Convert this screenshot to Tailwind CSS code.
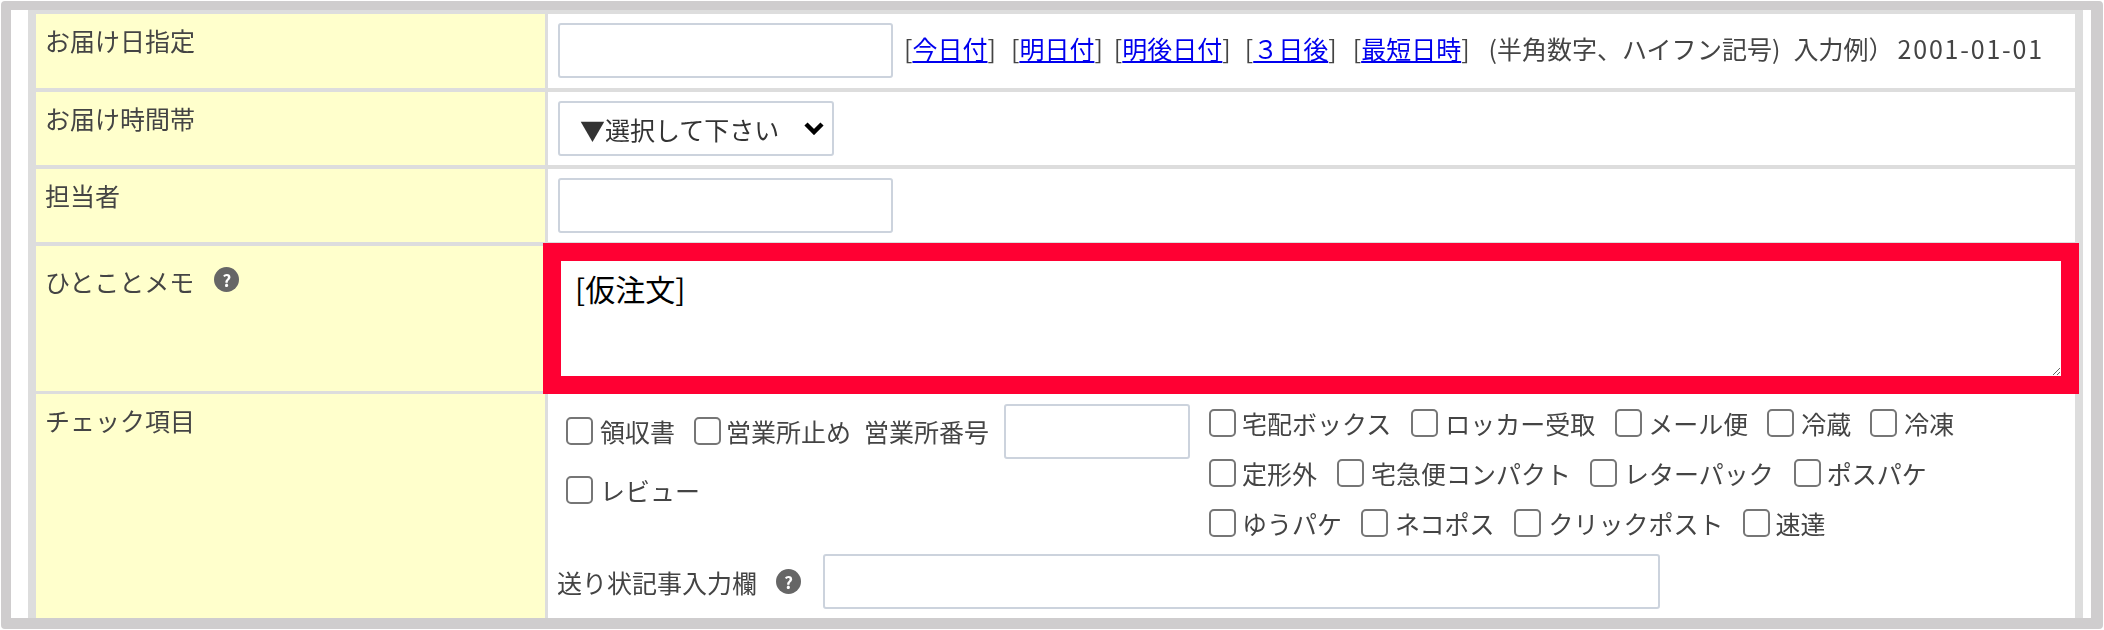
<!DOCTYPE html>
<html lang="ja">
<head>
    <meta charset="UTF-8">
    <title>受注入力</title>
    <script src="https://cdn.jsdelivr.net/npm/@tailwindcss/browser@4"></script>
</head>
<body class="w-[2104px] h-[630px] overflow-hidden bg-white font-['Noto_Sans_CJK_JP',sans-serif] text-[25px] leading-[36px] text-[#444]">

    <!-- outer frame -->
    <div class="mt-[1px] ml-[1px] w-[2102px] h-[628px] border-t-[9px] border-l-[10px] border-r-[12px] border-b-[11px] border-[#cfcdce] rounded-[4px] pl-[17px] pr-[8px] bg-white">
        <div class="h-full bg-[#dddddd] border-t-[4px] border-x-[8px] border-[#dddddd]">

            <!-- お届け日指定 -->
            <div class="flex h-[74px] mb-[4px]">
                <div class="w-[509px] shrink-0 bg-[#ffffcc] pl-[9px] pt-[8px] blur-[0.6px]">お届け日指定</div>
                <div class="flex-1 min-w-0 ml-[3px] bg-white pl-[10px] pt-[9px] flex items-start blur-[0.6px]">
                    <input type="text" class="w-[335px] h-[55px] border-2 border-[#ccd3dd] rounded-[3px] bg-white">
                    <div class="ml-[11px] mt-[7px] flex whitespace-nowrap">
                        <span>[<a href="#" class="text-[#0000ee] underline">今日付</a>]</span>
                        <span class="ml-[15px]">[<a href="#" class="text-[#0000ee] underline">明日付</a>]</span>
                        <span class="ml-[11px]">[<a href="#" class="text-[#0000ee] underline">明後日付</a>]</span>
                        <span class="ml-[14px]">[<a href="#" class="text-[#0000ee] underline">３日後</a>]</span>
                        <span class="ml-[16px]">[<a href="#" class="text-[#0000ee] underline">最短日時</a>]</span>
                        <span class="ml-[19px]">(半角数字、ハイフン記号)<span class="ml-[13px]">入力例）</span><span class="ml-[4px] tracking-[1.8px]">2001-01-01</span></span>
                    </div>
                </div>
            </div>

            <!-- お届け時間帯 -->
            <div class="flex h-[73px] mb-[4px]">
                <div class="w-[509px] shrink-0 bg-[#ffffcc] pl-[9px] pt-[8px] blur-[0.6px]">お届け時間帯</div>
                <div class="flex-1 min-w-0 ml-[3px] bg-white pl-[10px] pt-[9px] blur-[0.6px]">
                    <div class="relative w-[276px] h-[55px]">
                        <select class="appearance-none w-full h-full border-2 border-[#ccd3dd] rounded-[3px] bg-white pl-[20px] text-[#333]">
                            <option>▼選択して下さい</option>
                        </select>
                        <svg class="absolute left-[246px] top-[20px] w-[20px] h-[14px]" viewBox="0 0 20 14" fill="none" stroke="#000" stroke-width="4.5">
                            <path d="M2 3l8 8 8-8"/>
                        </svg>
                    </div>
                </div>
            </div>

            <!-- 担当者 -->
            <div class="flex h-[73px] mb-[4px]">
                <div class="w-[509px] shrink-0 bg-[#ffffcc] pl-[9px] pt-[8px] blur-[0.6px]">担当者</div>
                <div class="flex-1 min-w-0 ml-[3px] bg-white pl-[10px] pt-[9px] blur-[0.6px]">
                    <input type="text" class="w-[335px] h-[55px] border-2 border-[#ccd3dd] rounded-[3px] bg-white">
                </div>
            </div>

            <!-- ひとことメモ -->
            <div class="flex h-[145px] mb-[3px]">
                <div class="w-[509px] shrink-0 bg-[#ffffcc] pl-[9px] pt-[17px] flex items-start blur-[0.6px]">
                    <span>ひとことメモ</span>
                    <span class="ml-[20px] mt-[4px] w-[25px] h-[25px] rounded-full bg-[#666666] text-white text-[17px] leading-[25px] font-bold text-center">?</span>
                </div>
                <div class="flex-1 min-w-0 ml-[3px] bg-white">
                    <textarea class="relative z-10 block -ml-[5px] -mt-[3px] w-[1536px] h-[151px] border-[18px] border-[#ff0033] bg-white pl-[14px] pt-[9px] text-[30px] text-black outline-none">[仮注文]</textarea>
                </div>
            </div>

            <!-- チェック項目 -->
            <div class="flex h-[224px]">
                <div class="w-[509px] shrink-0 bg-[#ffffcc] pl-[9px] pt-[8px] blur-[0.6px]">チェック項目</div>
                <div class="flex-1 min-w-0 ml-[3px] bg-white pt-[10px] overflow-hidden blur-[0.6px]">
                    <div class="flex pl-[18px] h-[150px]">
                        <div class="w-[643px] shrink-0 pt-[13px]">
                            <div class="flex items-center h-[28px] whitespace-nowrap">
                                <input type="checkbox" class="w-[27px] h-[28px] m-0 appearance-none border-2 border-[#767676] rounded-[5px] bg-white">
                                <span class="ml-[7px]">領収書</span>
                                <input type="checkbox" class="ml-[19px] w-[27px] h-[28px] m-0 appearance-none border-2 border-[#767676] rounded-[5px] bg-white">
                                <span class="ml-[5px]">営業所止め</span>
                                <span class="ml-[13px]">営業所番号</span>
                                <input type="text" class="ml-[15px] -mt-[13px] self-start shrink-0 w-[186px] h-[55px] border-2 border-[#ccd3dd] rounded-[3px] bg-white">
                            </div>
                            <div class="flex items-center h-[28px] mt-[31px]">
                                <input type="checkbox" class="w-[27px] h-[28px] m-0 appearance-none border-2 border-[#767676] rounded-[5px] bg-white">
                                <span class="ml-[7px]">レビュー</span>
                            </div>
                        </div>
                        <div class="pt-[5px] flex flex-col gap-[22px] whitespace-nowrap">
                            <div class="flex items-center h-[28px]">
                                <input type="checkbox" class="w-[27px] h-[28px] m-0 appearance-none border-2 border-[#767676] rounded-[5px] bg-white"><span class="ml-[6px]">宅配ボックス</span>
                                <input type="checkbox" class="ml-[20px] w-[27px] h-[28px] m-0 appearance-none border-2 border-[#767676] rounded-[5px] bg-white"><span class="ml-[7px]">ロッカー受取</span>
                                <input type="checkbox" class="ml-[20px] w-[27px] h-[28px] m-0 appearance-none border-2 border-[#767676] rounded-[5px] bg-white"><span class="ml-[6px]">メール便</span>
                                <input type="checkbox" class="ml-[19px] w-[27px] h-[28px] m-0 appearance-none border-2 border-[#767676] rounded-[5px] bg-white"><span class="ml-[7px]">冷蔵</span>
                                <input type="checkbox" class="ml-[19px] w-[27px] h-[28px] m-0 appearance-none border-2 border-[#767676] rounded-[5px] bg-white"><span class="ml-[7px]">冷凍</span>
                            </div>
                            <div class="flex items-center h-[28px]">
                                <input type="checkbox" class="w-[27px] h-[28px] m-0 appearance-none border-2 border-[#767676] rounded-[5px] bg-white"><span class="ml-[6px]">定形外</span>
                                <input type="checkbox" class="ml-[20px] w-[27px] h-[28px] m-0 appearance-none border-2 border-[#767676] rounded-[5px] bg-white"><span class="ml-[7px]">宅急便コンパクト</span>
                                <input type="checkbox" class="ml-[19px] w-[27px] h-[28px] m-0 appearance-none border-2 border-[#767676] rounded-[5px] bg-white"><span class="ml-[7px]">レターパック</span>
                                <input type="checkbox" class="ml-[20px] w-[27px] h-[28px] m-0 appearance-none border-2 border-[#767676] rounded-[5px] bg-white"><span class="ml-[6px]">ポスパケ</span>
                            </div>
                            <div class="flex items-center h-[28px]">
                                <input type="checkbox" class="w-[27px] h-[28px] m-0 appearance-none border-2 border-[#767676] rounded-[5px] bg-white"><span class="ml-[6px]">ゆうパケ</span>
                                <input type="checkbox" class="ml-[19px] w-[27px] h-[28px] m-0 appearance-none border-2 border-[#767676] rounded-[5px] bg-white"><span class="ml-[7px]">ネコポス</span>
                                <input type="checkbox" class="ml-[19px] w-[27px] h-[28px] m-0 appearance-none border-2 border-[#767676] rounded-[5px] bg-white"><span class="ml-[8px]">クリックポスト</span>
                                <input type="checkbox" class="ml-[19px] w-[27px] h-[28px] m-0 appearance-none border-2 border-[#767676] rounded-[5px] bg-white"><span class="ml-[6px]">速達</span>
                            </div>
                        </div>
                    </div>
                    <div class="flex items-center pl-[9px]">
                        <span>送り状記事入力欄</span>
                        <span class="ml-[19px] w-[25px] h-[25px] rounded-full bg-[#666666] text-white text-[17px] leading-[25px] font-bold text-center">?</span>
                        <input type="text" class="ml-[22px] w-[837px] h-[55px] border-2 border-[#ccd3dd] rounded-[3px] bg-white">
                    </div>
                </div>
            </div>

        </div>
    </div>
</body>
</html>
